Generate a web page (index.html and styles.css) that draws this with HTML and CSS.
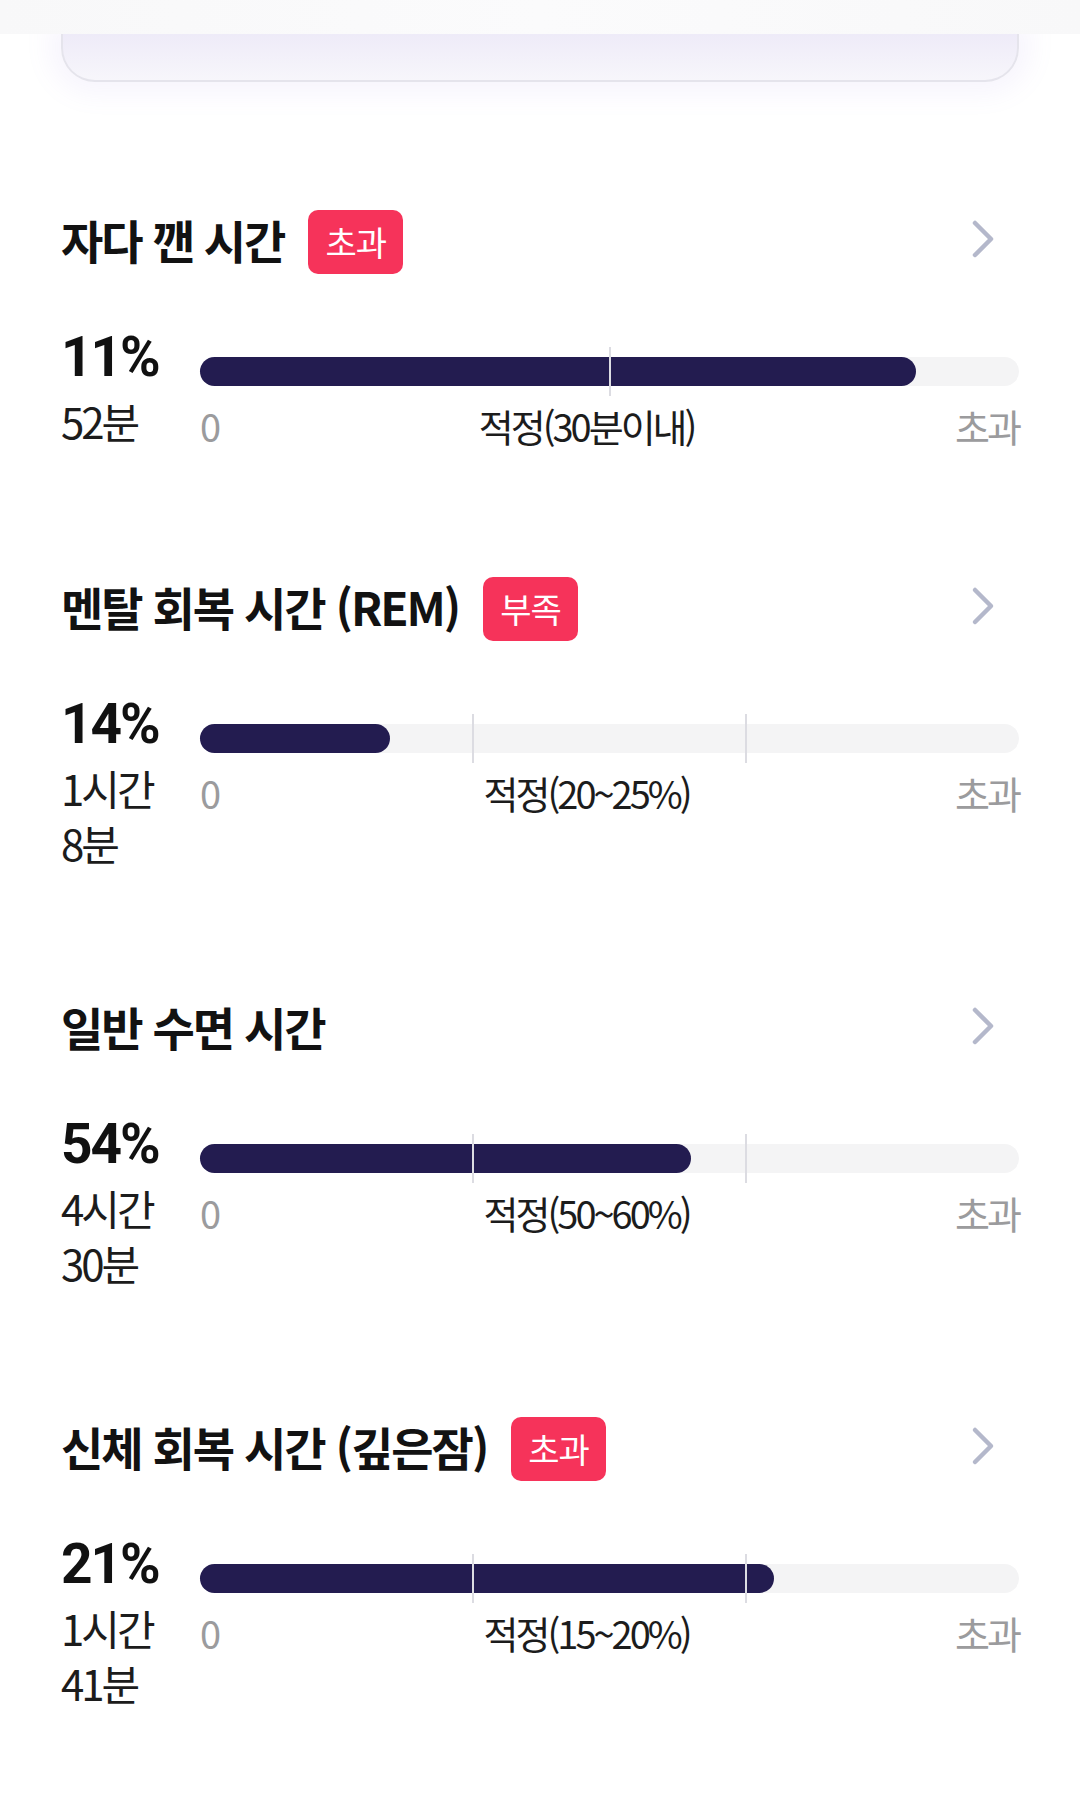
FILE: index.html
```html
<!DOCTYPE html>
<html lang="ko">
<head>
<meta charset="utf-8">
<title>수면 단계</title>
<link rel="stylesheet" href="styles.css">
</head>
<body>
<div class="top">
  <div class="header"></div>
  <div class="card-bottom"></div>
</div>
<main class="list">
  <section class="item">
    <div class="item-head">
      <h2 class="item-title">자다 깬 시간</h2>
      <span class="badge">초과</span>
      <svg class="chev" viewBox="0 0 24 40" width="24" height="40"><polyline points="4,4 20,20 4,36"/></svg>
    </div>
    <div class="item-body">
      <div class="stat">
        <div class="pct">11%</div>
        <div class="dur">52분</div>
      </div>
      <div class="gauge">
        <div class="track">
          <div class="fill" style="width:87.4%"></div>
          <span class="tick" style="left:50%"></span>
        </div>
        <div class="scale"><span class="end">0</span><span class="range">적정(30분이내)</span><span class="end">초과</span></div>
      </div>
    </div>
  </section>

  <section class="item">
    <div class="item-head">
      <h2 class="item-title">멘탈 회복 시간 (REM)</h2>
      <span class="badge">부족</span>
      <svg class="chev" viewBox="0 0 24 40" width="24" height="40"><polyline points="4,4 20,20 4,36"/></svg>
    </div>
    <div class="item-body">
      <div class="stat">
        <div class="pct">14%</div>
        <div class="dur">1시간 8분</div>
      </div>
      <div class="gauge">
        <div class="track">
          <div class="fill" style="width:23.2%"></div>
          <span class="tick" style="left:33.3%"></span>
          <span class="tick" style="left:66.7%"></span>
        </div>
        <div class="scale"><span class="end">0</span><span class="range">적정(20~25%)</span><span class="end">초과</span></div>
      </div>
    </div>
  </section>

  <section class="item">
    <div class="item-head">
      <h2 class="item-title">일반 수면 시간</h2>
      <svg class="chev" viewBox="0 0 24 40" width="24" height="40"><polyline points="4,4 20,20 4,36"/></svg>
    </div>
    <div class="item-body">
      <div class="stat">
        <div class="pct">54%</div>
        <div class="dur">4시간 30분</div>
      </div>
      <div class="gauge">
        <div class="track">
          <div class="fill" style="width:60%"></div>
          <span class="tick" style="left:33.3%"></span>
          <span class="tick" style="left:66.7%"></span>
        </div>
        <div class="scale"><span class="end">0</span><span class="range">적정(50~60%)</span><span class="end">초과</span></div>
      </div>
    </div>
  </section>

  <section class="item">
    <div class="item-head">
      <h2 class="item-title">신체 회복 시간 (깊은잠)</h2>
      <span class="badge">초과</span>
      <svg class="chev" viewBox="0 0 24 40" width="24" height="40"><polyline points="4,4 20,20 4,36"/></svg>
    </div>
    <div class="item-body">
      <div class="stat">
        <div class="pct">21%</div>
        <div class="dur">1시간 41분</div>
      </div>
      <div class="gauge">
        <div class="track">
          <div class="fill" style="width:70.1%"></div>
          <span class="tick" style="left:33.3%"></span>
          <span class="tick" style="left:66.7%"></span>
        </div>
        <div class="scale"><span class="end">0</span><span class="range">적정(15~20%)</span><span class="end">초과</span></div>
      </div>
    </div>
  </section>
</main>
</body>
</html>
```
FILE: styles.css
```css
* { box-sizing: border-box; }

html, body {
  margin: 0;
  padding: 0;
  background: #ffffff;
}

body {
  width: 1080px;
  min-height: 1800px;
  font-family: "Noto Sans CJK KR", "Noto Sans", sans-serif;
  color: #141414;
  overflow: hidden;
}

.top {
  position: relative;
}

.header {
  position: relative;
  z-index: 2;
  height: 34px;
  background: linear-gradient(90deg, #f8f8f9 0%, #fbfbfc 50%, #f8f8f9 100%);
}

.card-bottom {
  position: relative;
  z-index: 1;
  height: 48px;
  margin: 0 61px;
  border: 2px solid #e5e4ec;
  border-top: none;
  border-radius: 0 0 34px 34px;
  background: linear-gradient(180deg, #eeebf8 0%, #f7f6fb 100%);
  box-shadow: 0 0 26px 12px rgba(150, 130, 230, 0.08);
}

.list {
  padding: 125px 61px 0 61px;
}

.item {
  margin-bottom: 124px;
}

.item-head {
  display: flex;
  align-items: center;
  height: 64px;
  margin-bottom: 56px;
}

.item-title {
  margin: 0;
  font-size: 46px;
  font-weight: 700;
  line-height: 64px;
  letter-spacing: -2px;
  color: #121212;
}

.badge {
  margin-left: 24px;
  margin-top: 5px;
  height: 64px;
  padding: 0 17px;
  border-radius: 10px;
  background: #f6335a;
  color: #ffffff;
  font-size: 34px;
  font-weight: 400;
  line-height: 64px;
  letter-spacing: -1px;
}

.chev {
  margin-left: auto;
  margin-right: 24px;
  fill: none;
  stroke: #b4b8cb;
  stroke-width: 4.5;
  stroke-linecap: round;
  stroke-linejoin: round;
}

.item-body {
  display: grid;
  grid-template-columns: 118px 1fr;
  column-gap: 21px;
}

.pct {
  font-family: Roboto, "Noto Sans CJK KR", sans-serif;
  font-size: 55px;
  font-weight: 700;
  line-height: 60px;
  letter-spacing: -2px;
  color: #111111;
}

.dur {
  margin-top: 6px;
  font-size: 42px;
  font-weight: 400;
  line-height: 55px;
  letter-spacing: -3px;
  color: #1c1c1c;
}

.gauge {
  padding-top: 30px;
}

.track {
  position: relative;
  height: 29px;
  border-radius: 15px;
  background: #f4f4f5;
}

.fill {
  height: 100%;
  border-radius: 15px;
  background: #231c50;
}

.tick {
  position: absolute;
  top: -10px;
  bottom: -10px;
  width: 2px;
  margin-left: -1px;
  background: #dcdce2;
}

.scale {
  display: flex;
  justify-content: space-between;
  margin-top: 16px;
  font-size: 38px;
  line-height: 48px;
  letter-spacing: -3px;
}

.scale .end {
  color: #9b9b9d;
}

.scale .range {
  color: #1c1c1c;
}
```
